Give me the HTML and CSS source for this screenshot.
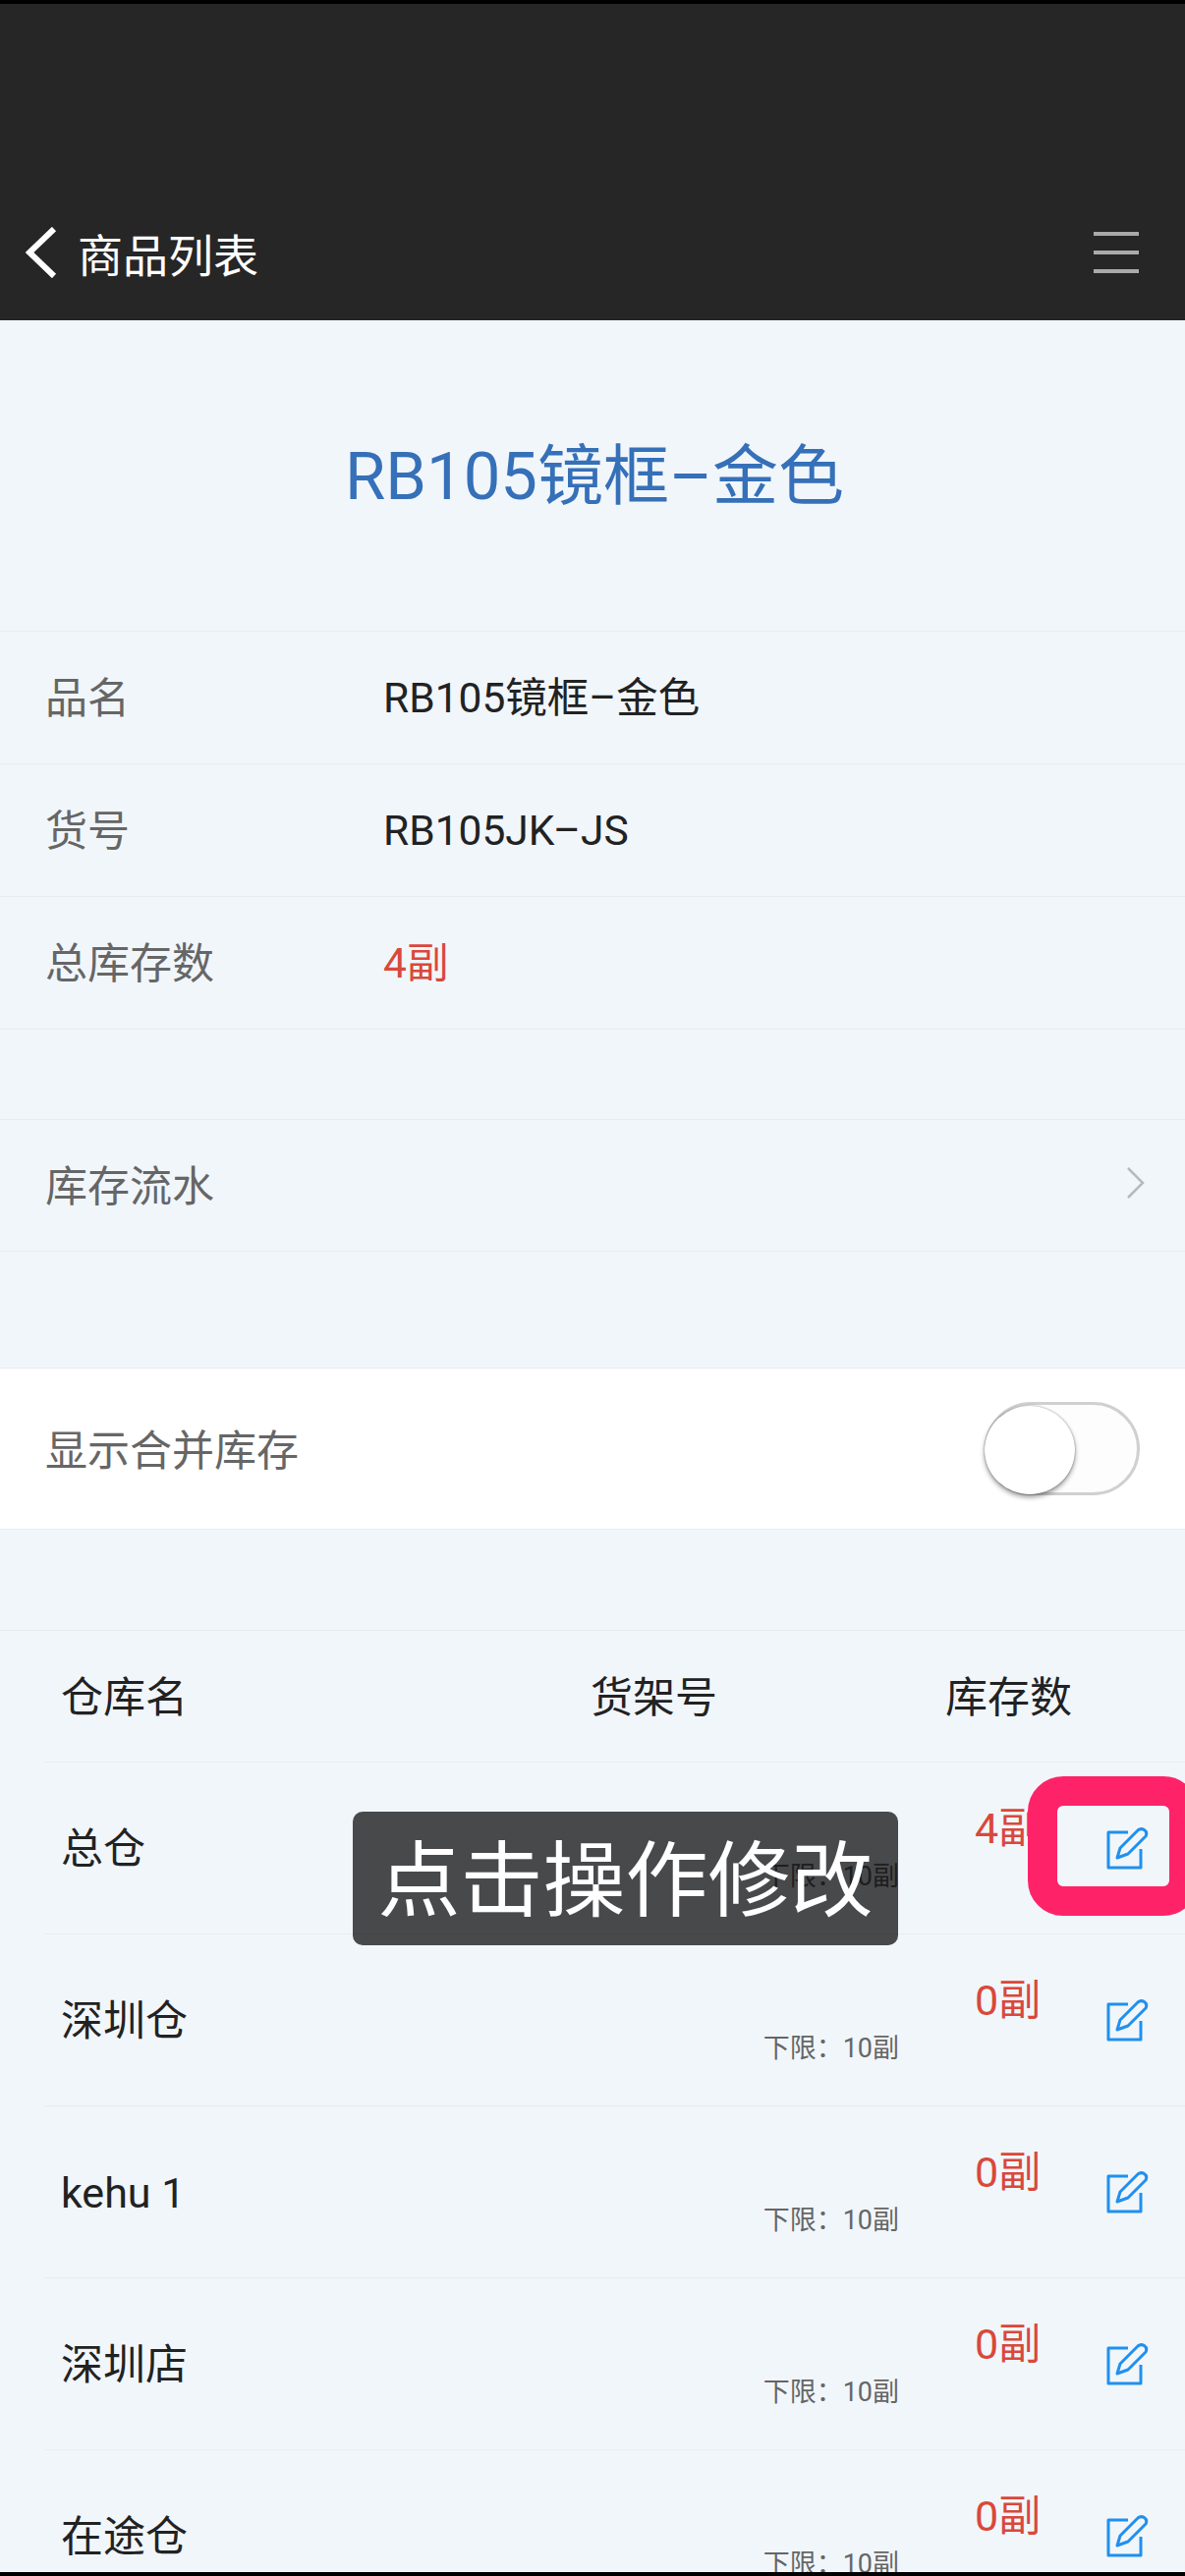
FILE: index.html
```html
<!DOCTYPE html>
<html lang="zh-CN">
<head>
    <meta charset="UTF-8">
    <meta name="viewport" content="width=device-width, initial-scale=1.0">
    <title>商品列表</title>
    <link rel="stylesheet" href="styles.css">
</head>
<body>
    <div class="page">
        <header class="topbar">
            <svg class="back-icon" viewBox="0 0 32 52" aria-hidden="true"><path d="M29 2 L4 26 L29 50" /></svg>
            <span class="topbar-title">商品列表</span>
            <div class="menu-icon"><span></span><span></span><span></span></div>
        </header>

        <h1 class="product-title">RB105镜框–金色</h1>

        <section class="info">
            <div class="info-row"><span class="info-label">品名</span><span class="info-value">RB105镜框–金色</span></div>
            <div class="info-row"><span class="info-label">货号</span><span class="info-value">RB105JK–JS</span></div>
            <div class="info-row"><span class="info-label">总库存数</span><span class="info-value info-red">4副</span></div>
        </section>

        <div class="link-row">
            <span class="info-label">库存流水</span>
            <svg class="chevron" viewBox="0 0 20 32" aria-hidden="true"><path d="M2 1 L17 16 L2 31" /></svg>
        </div>

        <div class="switch-row">
            <span class="info-label">显示合并库存</span>
            <div class="switch"><div class="switch-knob"></div></div>
        </div>

        <section class="stock">
            <div class="stock-head">
                <span>仓库名</span>
                <span>货架号</span>
                <span>库存数</span>
            </div>
            <div class="stock-row">
                <span class="stock-name">总仓</span>
                <span class="stock-limit">下限：10副</span>
                <span class="stock-count">4副</span>
                <svg class="edit-icon" viewBox="0 0 44 44" aria-hidden="true"><path d="M23 6 H3 V42 H36 V23" /><path d="M12 32 L15 22 L33 4 Q36 1.5 39.5 3.5 Q43 6 41 10 L23 28 Z" /></svg>
            </div>
            <div class="stock-row">
                <span class="stock-name">深圳仓</span>
                <span class="stock-limit">下限：10副</span>
                <span class="stock-count">0副</span>
                <svg class="edit-icon" viewBox="0 0 44 44" aria-hidden="true"><path d="M23 6 H3 V42 H36 V23" /><path d="M12 32 L15 22 L33 4 Q36 1.5 39.5 3.5 Q43 6 41 10 L23 28 Z" /></svg>
            </div>
            <div class="stock-row">
                <span class="stock-name">kehu 1</span>
                <span class="stock-limit">下限：10副</span>
                <span class="stock-count">0副</span>
                <svg class="edit-icon" viewBox="0 0 44 44" aria-hidden="true"><path d="M23 6 H3 V42 H36 V23" /><path d="M12 32 L15 22 L33 4 Q36 1.5 39.5 3.5 Q43 6 41 10 L23 28 Z" /></svg>
            </div>
            <div class="stock-row">
                <span class="stock-name">深圳店</span>
                <span class="stock-limit">下限：10副</span>
                <span class="stock-count">0副</span>
                <svg class="edit-icon" viewBox="0 0 44 44" aria-hidden="true"><path d="M23 6 H3 V42 H36 V23" /><path d="M12 32 L15 22 L33 4 Q36 1.5 39.5 3.5 Q43 6 41 10 L23 28 Z" /></svg>
            </div>
            <div class="stock-row">
                <span class="stock-name">在途仓</span>
                <span class="stock-limit">下限：10副</span>
                <span class="stock-count">0副</span>
                <svg class="edit-icon" viewBox="0 0 44 44" aria-hidden="true"><path d="M23 6 H3 V42 H36 V23" /><path d="M12 32 L15 22 L33 4 Q36 1.5 39.5 3.5 Q43 6 41 10 L23 28 Z" /></svg>
            </div>
        </section>

        <!-- overlays from the guide step -->
        <div class="guide-toast">点击操作修改</div>
        <div class="guide-box"></div>
        <div class="screen-edge"></div>
    </div>
</body>
</html>
```

FILE: styles.css
```css
* {
    box-sizing: border-box;
}

body {
    margin: 0;
    font-family: Roboto, "Noto Sans CJK SC", sans-serif;
    background-color: #f1f6fb;
}

.page {
    position: relative;
    width: 1206px;
    height: 2622px;
    overflow: hidden;
}

.topbar {
    display: flex;
    align-items: center;
    height: 326px;
    padding: 184px 47px 0 26px;
    background-color: #262626;
    border-top: 4px solid #000;
    color: #fff;
}

.back-icon {
    width: 32px;
    height: 52px;
    fill: none;
    stroke: #fff;
    stroke-width: 6;
}

.topbar-title {
    margin-left: 21px;
    font-size: 46px;
}

.menu-icon {
    display: flex;
    flex-direction: column;
    gap: 15px;
    width: 46px;
    margin-left: auto;
}

.menu-icon span {
    height: 4px;
    background-color: #aaa;
}

.product-title {
    display: flex;
    align-items: center;
    justify-content: center;
    height: 316px;
    margin: 0;
    padding: 0 0 12px 4px;
    font-size: 67px;
    font-weight: 400;
    color: #3570b8;
}

.info {
    border-top: 1px solid #e8ecf0;
}

.info-row {
    display: flex;
    align-items: center;
    height: 135px;
    padding-left: 46px;
    padding-top: 2px;
    line-height: 60px;
    border-bottom: 1px solid #e8ecf0;
}

.info-label {
    width: 344px;
    font-size: 43px;
    color: #666;
}

.info-value {
    font-size: 42.5px;
    color: #222;
}

.info-red {
    color: #d9483b;
}

.link-row {
    display: flex;
    align-items: center;
    justify-content: space-between;
    height: 135px;
    margin-top: 91px;
    padding: 0 40px 6px 46px;
    border-top: 1px solid #e8ecf0;
    border-bottom: 1px solid #e8ecf0;
}

.chevron {
    width: 20px;
    height: 32px;
    fill: none;
    stroke: #b5bac0;
    stroke-width: 2.5;
}

.switch-row {
    display: flex;
    align-items: center;
    justify-content: space-between;
    height: 165px;
    margin-top: 118px;
    padding: 0 46px;
    background-color: #fff;
    border-top: 1px solid #e8ecf0;
    border-bottom: 1px solid #e8ecf0;
}

.switch-row .info-label {
    width: auto;
    padding-bottom: 3px;
}

.switch {
    width: 158px;
    height: 95px;
    padding-top: 1px;
    background-color: #fdfdfd;
    border: 3px solid #d0d0d0;
    border-radius: 48px;
}

.switch-knob {
    width: 92px;
    height: 90px;
    margin-left: -3px;
    background-color: #fff;
    border-radius: 50%;
    box-shadow: 0 3px 5px rgba(0, 0, 0, 0.4), 0 0 2px rgba(0, 0, 0, 0.4);
}

.stock {
    margin-top: 102px;
    border-top: 1px solid #e8ecf0;
}

.stock-head {
    display: grid;
    grid-template-columns: 539px 361px 1fr;
    align-items: center;
    height: 134px;
    margin-left: 46px;
    padding-left: 16px;
    padding-bottom: 6px;
    font-size: 43px;
    color: #222;
    border-bottom: 1px solid #e8ecf0;
}

.stock-row {
    display: grid;
    grid-template-columns: 539px 314px 210px 44px;
    height: 175px;
    margin-left: 46px;
    padding-left: 16px;
    border-bottom: 1px solid #e8ecf0;
}

.stock-name {
    align-self: center;
    padding-top: 2px;
    font-size: 43px;
    line-height: 60px;
    color: #222;
}

.stock-limit {
    padding-top: 94px;
    font-size: 27px;
    text-align: right;
    color: #666;
}

.stock-count {
    padding: 32px 0 0 77px;
    font-size: 43px;
    color: #d9483b;
}

.edit-icon {
    align-self: center;
    width: 44px;
    height: 44px;
    fill: none;
    stroke: #2090ee;
    stroke-width: 3;
    stroke-linejoin: round;
}

.guide-toast {
    position: absolute;
    top: 1844px;
    left: 359px;
    display: flex;
    align-items: center;
    justify-content: center;
    width: 555px;
    height: 136px;
    padding-bottom: 10px;
    font-size: 84px;
    color: #fff;
    background-color: rgba(0, 0, 0, 0.7);
    border-radius: 10px;
}

.guide-box {
    position: absolute;
    top: 1808px;
    left: 1046px;
    width: 174px;
    height: 142px;
    border: 30px solid #fe2368;
    border-radius: 36px;
}

.screen-edge {
    position: absolute;
    bottom: 0;
    left: 0;
    width: 100%;
    height: 4px;
    background-color: #000;
}
```
